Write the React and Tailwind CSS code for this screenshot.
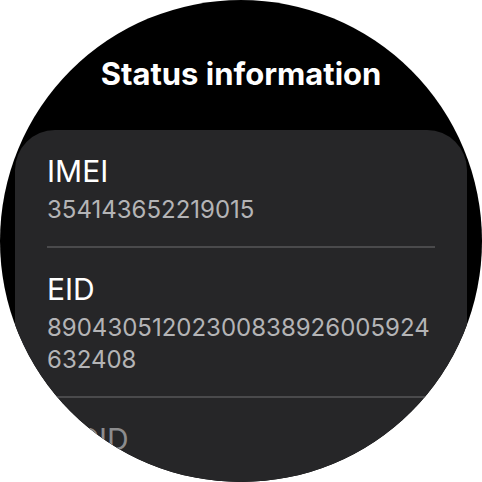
import React from "react";

const rows = [
  { label: "IMEI", value: "354143652219015" },
  { label: "EID", value: "89043051202300838926005924632408" },
  { label: "ICCID", value: "" },
];

const App = () => {
  return (
    <div className="w-[482px] h-[482px] bg-white">
      <div
        className="w-[482px] h-[482px] rounded-full bg-black overflow-hidden flex flex-col"
        style={{ fontFamily: "Inter, 'Noto Sans', sans-serif" }}
      >
        <h1 className="pt-[54px] text-center text-[31px] leading-[40px] font-bold text-white">
          Status information
        </h1>
        <div className="mt-[36px] mx-[15px] rounded-[40px] bg-[#262628] px-8 flex-1">
          {rows.map((row, i) => (
            <div
              key={row.label}
              className={`pt-[23px] pb-[20px] ${
                i < rows.length - 1 ? "border-b-2 border-[#4a4a4c]" : ""
              }`}
            >
              <p
                className={`text-[30px] leading-[36px] ${
                  i === 2 ? "text-[#8c8c8e]" : "text-white"
                }`}
              >
                {row.label}
              </p>
              {row.value && (
                <p className="mt-[5px] text-[24px] leading-[32px] text-[#b4b4b6] break-all">
                  {row.value}
                </p>
              )}
            </div>
          ))}
        </div>
      </div>
    </div>
  );
};

export default App;
